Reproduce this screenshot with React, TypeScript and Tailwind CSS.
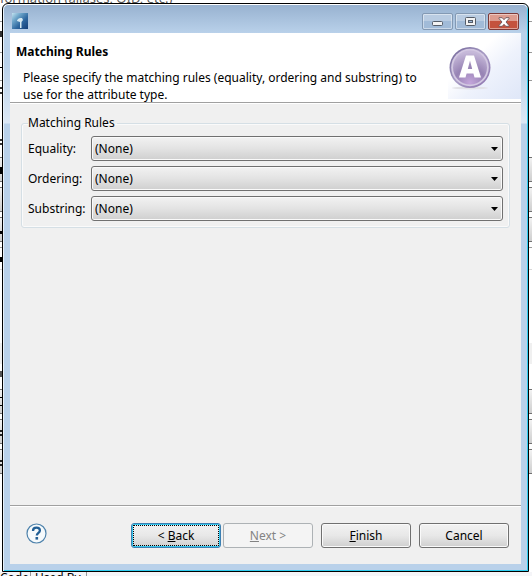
import React from 'react';

const FONT = "font-['Noto_Sans','Open_Sans',sans-serif]";

type Band = { h: number; cls: string };

const combo = 'border-y border-[#707070] bg-linear-to-b from-[#f2f2f2] to-[#cfcfcf]';

const rows: Band[] = [
  { h: 21, cls: 'bg-white' },
  { h: 1, cls: 'bg-[#9a9a9a]' },
  { h: 30, cls: 'bg-white' },
  { h: 1, cls: 'bg-[#9a9a9a]' },
  { h: 27, cls: 'bg-white' },
  { h: 1, cls: 'bg-[#9a9a9a]' },
  { h: 76, cls: 'bg-white' },
  { h: 25, cls: combo },
  { h: 5, cls: 'bg-white' },
  { h: 25, cls: combo },
  { h: 5, cls: 'bg-white' },
  { h: 25, cls: combo },
  { h: 5, cls: 'bg-white' },
  { h: 1, cls: 'bg-[#9a9a9a]' },
  { h: 21, cls: 'bg-white' },
  { h: 1, cls: 'bg-[#d8d8d8]' },
  { h: 73, cls: 'bg-white' },
  { h: 21, cls: 'bg-[#f0f0f0]' },
  { h: 25, cls: 'bg-white' },
  { h: 25, cls: combo },
  { h: 5, cls: 'bg-white' },
  { h: 25, cls: combo },
  { h: 5, cls: 'bg-white' },
  { h: 25, cls: combo },
];

const marks: Band[] = [
  { h: 31, cls: '' },
  { h: 6, cls: 'bg-[#333]' },
  { h: 30, cls: '' },
  { h: 1, cls: 'bg-black' },
  { h: 19, cls: '' },
  { h: 7, cls: 'border-y-2 border-[#333]' },
  { h: 45, cls: '' },
  { h: 6, cls: 'border-y-2 border-[#333]' },
  { h: 22, cls: '' },
  { h: 7, cls: 'bg-black' },
  { h: 57, cls: '' },
  { h: 3, cls: 'bg-black' },
  { h: 23, cls: '' },
  { h: 5, cls: 'bg-black' },
  { h: 109, cls: '' },
  { h: 6, cls: 'bg-[#555]' },
  { h: 20, cls: '' },
  { h: 9, cls: 'border-y border-black' },
  { h: 24, cls: '' },
  { h: 6, cls: 'border-y-2 border-[#222]' },
  { h: 24, cls: '' },
  { h: 6, cls: 'border-y-2 border-[#222]' },
];

function Bands({ items }: { items: Band[] }) {
  return (
    <>
      {items.map((b, i) => (
        <div key={i} className={'shrink-0 ' + b.cls} style={{ height: b.h }} />
      ))}
    </>
  );
}

function Editor() {
  return (
    <div aria-hidden="true" className="absolute inset-0 flex flex-col overflow-hidden bg-white">
      <div className="absolute -top-3 left-0 text-[13px] leading-5 text-[#555]">formation (aliases, OID, etc.)</div>
      <div className="flex flex-1 flex-col">
        <Bands items={rows} />
      </div>
      <div className="absolute left-0 top-0 flex w-0.5 flex-col">
        <Bands items={marks} />
      </div>
      <div className="flex h-1 shrink-0 overflow-hidden bg-[#f5f5f8] text-xs leading-3 text-black">
        <span className="w-[31px] border-r border-[#999]">Code</span>
        <span className="w-14 border-r border-[#999] pl-1">Used By</span>
      </div>
    </div>
  );
}

const caption =
  'flex h-[17px] w-[31px] items-center justify-center rounded-[2px] border shadow-[inset_0_0_0_1px_rgba(255,255,255,0.45)]';
const glass = ' border-[#8399b3] bg-linear-to-b from-[#b9cce2] from-50% to-[#a1bbd8] to-50%';

function TitleBar() {
  return (
    <div className="flex h-7 items-start bg-linear-to-b from-[#98b2d0] to-[#b9d1ea] pl-2 pr-2 pt-2">
      <svg width="16" height="16" viewBox="0 0 16 16" className="shrink-0" aria-hidden="true">
        <defs>
          <linearGradient id="app" x1="0" y1="0" x2="1" y2="1">
            <stop offset="0" stopColor="#c3e3f0" />
            <stop offset="0.3" stopColor="#6ba3c8" />
            <stop offset="0.6" stopColor="#2f68a0" />
            <stop offset="1" stopColor="#153f78" />
          </linearGradient>
        </defs>
        <rect width="16" height="16" fill="url(#app)" />
        <path d="M5 8c0-2 2-3.500 5-3l1 2-1.500 2v6H8V9z" fill="#d5e8f1" />
      </svg>
      <div className="ml-auto flex gap-0.5">
        <button aria-label="Minimize" className={caption + glass}>
          <svg width="11" height="5" viewBox="0 0 11 5" className="mt-1"><rect x=".5" y=".5" width="10" height="4" rx="1" fill="#f3f3f3" stroke="#555d68" /></svg>
        </button>
        <button aria-label="Maximize" className={caption + glass}>
          <svg width="11" height="9" viewBox="0 0 11 9"><rect x=".5" y=".5" width="10" height="8" rx="1" fill="#f3f3f3" stroke="#555d68" /><rect x="3.500" y="3.500" width="4" height="2" fill="#9db8d8" stroke="#555d68" /></svg>
        </button>
        <button aria-label="Close" className={caption + ' border-[#7c3a38] bg-linear-to-b from-[#dd9c8f] from-50% to-[#c4523d] to-50%'}>
          <svg width="12" height="10" viewBox="0 0 12 10"><path d="M1 .7h3.200L6 2.700l1.800-2H11v.8L8 5l3 3.500v.8H7.800L6 7.300l-1.800 2H1v-.8L4 5 1 1.500z" fill="#fff" stroke="#6b5358" strokeWidth=".9" /></svg>
        </button>
      </div>
    </div>
  );
}

function AttributeBadge() {
  return (
    <svg width="44" height="48" viewBox="0 0 44 48" className="mr-[29px] shrink-0" aria-hidden="true">
      <defs>
        <linearGradient id="ring" x1="0" y1="0" x2="1" y2="1">
          <stop offset="0" stopColor="#6f6396" />
          <stop offset="0.5" stopColor="#a79bc4" />
          <stop offset="1" stopColor="#8c72ae" />
        </linearGradient>
        <radialGradient id="orb" cx="0.5" cy="0.95" r="0.9">
          <stop offset="0" stopColor="#c3a5da" />
          <stop offset="0.5" stopColor="#9783b4" />
          <stop offset="1" stopColor="#c6b9d9" />
        </radialGradient>
      </defs>
      <ellipse cx="22" cy="43" rx="18" ry="1.500" fill="#e2e2e7" />
      <circle cx="22" cy="22.500" r="20.500" fill="url(#ring)" />
      <circle cx="22" cy="22.500" r="18.800" fill="#d3c8e2" />
      <circle cx="22" cy="22.500" r="17" fill="url(#orb)" />
      <path d="M18 10.500h8L33 32.500h-6.500l-1.100-4h-6.800l-1.100 4H11zM22 15.500l-2.200 8.500h4.400z" fill="#fff" fillRule="evenodd" />
    </svg>
  );
}

function Header() {
  return (
    <header className="flex h-[70px] items-start border-b border-[#a0a0a0] bg-white">
      <div className="flex-1 pt-[9px]">
        <h1 className="pl-1.5 text-xs font-bold leading-5">Matching Rules</h1>
        <p className="pl-[13px] pt-[7px] text-xs leading-[17px]">
          Please specify the matching rules (equality, ordering and substring) to
          <br />
          use for the attribute type.
        </p>
      </div>
      <div className="flex h-[66px] shrink-0 items-start bg-linear-to-br from-white from-35% via-[#eef2fc] via-60% to-[#dfe7f8] pt-3">
        <AttributeBadge />
      </div>
    </header>
  );
}

function RuleSelect({ id, label }: { id: string; label: string }) {
  return (
    <div className="flex items-center">
      <label htmlFor={id} className="w-[63px] shrink-0">{label}</label>
      <div className="relative flex-1">
        <select
          id={id}
          className="block h-[25px] w-full appearance-none rounded-[3px] border border-[#707070] bg-linear-to-b from-[#f2f2f2] via-[#e3e3e3] to-[#cfcfcf] px-[3px] shadow-[inset_0_0_0_1px_#fafafa]"
        >
          <option>(None)</option>
        </select>
        <svg width="7" height="4" viewBox="0 0 7 4" className="pointer-events-none absolute right-[5px] top-[11px]" aria-hidden="true">
          <path d="M0 0h7L3.500 4z" fill="#000" />
        </svg>
      </div>
    </div>
  );
}

const pushButton = 'h-[25px] w-[90px] rounded-[3px] border';
const raised = 'bg-linear-to-b from-[#f2f2f2] via-[#e8e8e8] via-50% to-[#cfcfcf]';

export default function App() {
  return (
    <div className={'relative flex min-h-screen pb-1 pl-0.5 pr-[3px] pt-[3px] text-xs text-black ' + FONT}>
      <Editor />
      <main className="relative flex flex-1 flex-col rounded-t-[6px] border border-black bg-linear-to-b from-[#b9d1ea] from-[60px] via-[#dce8f5] via-[119px] to-[#b9d1ea] to-[120px] shadow-[inset_0_1px_0_#fff,inset_1px_0_0_#e8f2fb,inset_-1px_-1px_0_#2fcdf0]">
        <div className="mx-px mt-px overflow-hidden rounded-t-[5px]">
          <TitleBar />
        </div>
        <div className="mx-[7px] mb-[7px] flex flex-1 flex-col bg-[#f0f0f0]">
          <Header />
          <section className="flex-1 border-t border-white px-[11px] pt-[11px]">
            <fieldset className="rounded-[3px] border border-[#d5dfe5] px-1.5 pb-1.5 shadow-[inset_0_0_0_1px_#fafafa]">
              <legend className="pr-0.5 leading-4">Matching Rules</legend>
              <div className="flex flex-col gap-[5px] pt-[5px]">
                <RuleSelect id="equality" label="Equality:" />
                <RuleSelect id="ordering" label="Ordering:" />
                <RuleSelect id="substring" label="Substring:" />
              </div>
            </fieldset>
          </section>
          <footer className="flex h-[59px] items-start border-t border-[#a0a0a0] pl-4 pr-3 pt-[17px] shadow-[inset_0_1px_0_#fff]">
            <button aria-label="Help" className="shrink-0">
              <svg width="21" height="21" viewBox="0 0 21 21">
                <circle cx="10.500" cy="10.500" r="9.500" fill="#f6fafc" stroke="#4f83ac" strokeWidth="1.200" />
                <path d="M7 8C7 5.700 8.500 4.700 10.500 4.700c2 0 3.400 1.100 3.400 2.800 0 2.300-3.100 2.500-3.100 5.100" fill="none" stroke="#225f95" strokeWidth="2.300" />
                <rect x="9.500" y="14" width="2.600" height="2.600" fill="#225f95" />
              </svg>
            </button>
            <div className="ml-auto flex">
              <button className={pushButton + ' border-[#3c7fb1] p-px shadow-[inset_0_0_0_1px_#37c8ee] ' + raised}>
                <span className="flex h-full items-center justify-center border border-dotted border-black">
                  <span>&lt; <u>B</u>ack</span>
                </span>
              </button>
              <button disabled className={pushButton + ' ml-0.5 border-[#adb2b5] bg-[#f4f4f4] text-[#838383]'}><u>N</u>ext &gt;</button>
              <button className={pushButton + ' ml-2 border-[#707070] shadow-[inset_0_0_0_1px_#fafafa] ' + raised}><u>F</u>inish</button>
              <button className={pushButton + ' ml-2 border-[#707070] shadow-[inset_0_0_0_1px_#fafafa] ' + raised}>Cancel</button>
            </div>
          </footer>
        </div>
      </main>
    </div>
  );
}
